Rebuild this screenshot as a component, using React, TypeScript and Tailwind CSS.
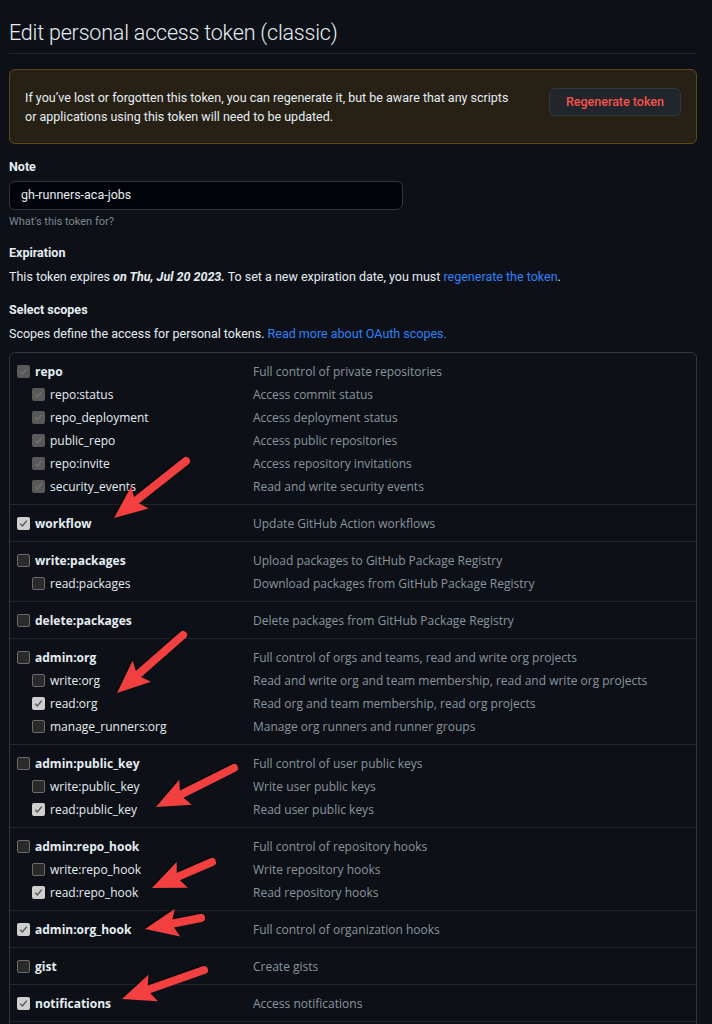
import React from "react";

type CB = "d" | "c" | "u";
type Row = { label: string; desc: string; cb: CB; child?: boolean };

const groups: Row[][] = [
  [
    { label: "repo", desc: "Full control of private repositories", cb: "d" },
    { label: "repo:status", desc: "Access commit status", cb: "d", child: true },
    { label: "repo_deployment", desc: "Access deployment status", cb: "d", child: true },
    { label: "public_repo", desc: "Access public repositories", cb: "d", child: true },
    { label: "repo:invite", desc: "Access repository invitations", cb: "d", child: true },
    { label: "security_events", desc: "Read and write security events", cb: "d", child: true },
  ],
  [{ label: "workflow", desc: "Update GitHub Action workflows", cb: "c" }],
  [
    { label: "write:packages", desc: "Upload packages to GitHub Package Registry", cb: "u" },
    { label: "read:packages", desc: "Download packages from GitHub Package Registry", cb: "u", child: true },
  ],
  [{ label: "delete:packages", desc: "Delete packages from GitHub Package Registry", cb: "u" }],
  [
    { label: "admin:org", desc: "Full control of orgs and teams, read and write org projects", cb: "u" },
    { label: "write:org", desc: "Read and write org and team membership, read and write org projects", cb: "u", child: true },
    { label: "read:org", desc: "Read org and team membership, read org projects", cb: "c", child: true },
    { label: "manage_runners:org", desc: "Manage org runners and runner groups", cb: "u", child: true },
  ],
  [
    { label: "admin:public_key", desc: "Full control of user public keys", cb: "u" },
    { label: "write:public_key", desc: "Write user public keys", cb: "u", child: true },
    { label: "read:public_key", desc: "Read user public keys", cb: "c", child: true },
  ],
  [
    { label: "admin:repo_hook", desc: "Full control of repository hooks", cb: "u" },
    { label: "write:repo_hook", desc: "Write repository hooks", cb: "u", child: true },
    { label: "read:repo_hook", desc: "Read repository hooks", cb: "c", child: true },
  ],
  [{ label: "admin:org_hook", desc: "Full control of organization hooks", cb: "c" }],
  [{ label: "gist", desc: "Create gists", cb: "u" }],
  [{ label: "notifications", desc: "Access notifications", cb: "c" }],
];

function Check({ kind }: { kind: CB }) {
  if (kind === "u") {
    return <span className="block w-[13px] h-[13px] rounded-[2px] bg-[#2a2a2a] border border-[#6b6b6b]" />;
  }
  const bg = kind === "d" ? "bg-[#595959]" : "bg-[#cfcfcf]";
  const stroke = kind === "d" ? "#707070" : "#5b5b5b";
  return (
    <span className={`flex items-center justify-center w-[13px] h-[13px] rounded-[2px] ${bg}`}>
      <svg width="9" height="9" viewBox="0 0 9 9">
        <path d="M1.2 4.8 L3.4 7 L7.8 1.6" fill="none" stroke={stroke} strokeWidth="1.5" />
      </svg>
    </span>
  );
}

const arrows: [number, number, number, number][] = [
  [186, 461, 114, 518],
  [183, 635, 117, 693],
  [234, 768, 156, 807],
  [212, 862, 152, 888],
  [201, 918, 145, 929],
  [204, 970, 122, 999],
];

function Arrow({ a }: { a: [number, number, number, number] }) {
  const [x1, y1, x2, y2] = a;
  const dx = x2 - x1;
  const dy = y2 - y1;
  const L = Math.sqrt(dx * dx + dy * dy);
  const ang = (Math.atan2(dy, dx) * 180) / Math.PI;
  const head = 30;
  const pts = `${L},0 ${L - head - 3},-14 ${L - head + 3},0 ${L - head - 3},14`;
  return (
    <g transform={`translate(${x1} ${y1}) rotate(${ang})`}>
      <g transform="translate(1.5 2)" opacity="0.35">
        <line x1="0" y1="0" x2={L - head + 4} y2="0" stroke="#000" strokeWidth="8" strokeLinecap="round" />
        <polygon points={pts} fill="#000" />
      </g>
      <line x1="0" y1="0" x2={L - head + 4} y2="0" stroke="#f23f3f" strokeWidth="8" strokeLinecap="round" />
      <polygon points={pts} fill="#f23f3f" />
    </g>
  );
}

export default function App() {
  return (
    <div
      className="relative min-h-screen bg-[#0d1117] text-[#e6edf3] pl-[9px] pr-[15px] overflow-hidden"
      style={{ fontFamily: "Roboto, sans-serif" }}
    >
      <h1 className="pt-[18px] pb-[5px] text-[21.5px] leading-[30px] font-light text-[#e6edf3] border-b border-[#21262d] tracking-[-0.2px]">
        Edit personal access token (classic)
      </h1>

      <div className="mt-[15px] h-[75px] flex items-center justify-between rounded-md border border-[#5c4a1e] bg-[#272115] pl-[15px] pr-[15px]">
        <p className="text-[12.5px] leading-[19px] text-[#e6edf3]">
          If you’ve lost or forgotten this token, you can regenerate it, but be aware that any scripts
          <br />
          or applications using this token will need to be updated.
        </p>
        <button className="mb-[9px] h-[28px] px-[16px] rounded-md bg-[#21262d] border border-[#30363d] text-[#f85149] text-[12.5px] font-medium">
          Regenerate token
        </button>
      </div>

      <div className="mt-[14px] text-[12.5px] font-bold leading-[18px]">Note</div>
      <div className="mt-[5px] w-[394px] h-[29px] rounded-md border border-[#30363d] bg-[#010409] flex items-center pl-[11px] text-[12.5px]">
        gh-runners-aca-jobs
      </div>
      <div className="mt-[5px] text-[11px] text-[#7d8590] leading-[14px]">What's this token for?</div>

      <div className="mt-[15px] text-[12.5px] font-bold leading-[18px]">Expiration</div>
      <div className="mt-[6px] text-[12.5px] leading-[18px]">
        This token expires <b className="italic">on Thu, Jul 20 2023.</b> To set a new expiration date, you must{" "}
        <span className="text-[#2f81f7]">regenerate the token</span>.
      </div>

      <div className="mt-[15px] text-[12.5px] font-bold leading-[18px]">Select scopes</div>
      <div className="mt-[6px] text-[12.5px] leading-[18px]">
        Scopes define the access for personal tokens.{" "}
        <span className="text-[#2f81f7]">Read more about OAuth scopes.</span>
      </div>

      <div
        className="mt-[9px] w-[688px] rounded-md border border-[#30363d] text-[12px]"
        style={{ fontFamily: "'Open Sans', sans-serif" }}
      >
        {groups.map((g, gi) => (
          <div key={gi} className={`pt-[7px] pb-[6px] ${gi > 0 ? "border-t border-[#21262d]" : ""}`}>
            {g.map((r) => (
              <div key={r.label} className="h-[23px] flex items-center">
                <div className={`w-[243px] flex items-center gap-[5px] ${r.child ? "pl-[22px]" : "pl-[7px]"}`}>
                  <Check kind={r.cb} />
                  <span className={r.child ? "text-[#e6edf3]" : "font-bold text-[#e6edf3]"}>{r.label}</span>
                </div>
                <div className="text-[#8b949e]">{r.desc}</div>
              </div>
            ))}
          </div>
        ))}
        <div className="h-[20px] border-t border-[#21262d]" />
      </div>

      <svg className="absolute left-0 top-0 pointer-events-none" width="712" height="1024">
        {arrows.map((a, i) => (
          <Arrow key={i} a={a} />
        ))}
      </svg>
    </div>
  );
}
